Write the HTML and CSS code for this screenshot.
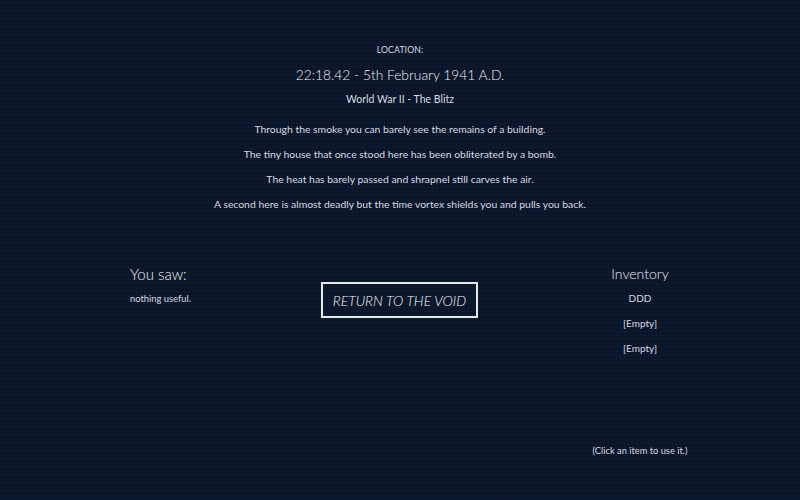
FILE: index.html
```html
<!DOCTYPE html>
<html>
<head>
<meta charset="utf-8">
<link rel="stylesheet" href="styles.css">
</head>
<body>
<div class="screen">
  <header class="scene">
    <div class="label">LOCATION:</div>
    <div class="date">22:18.42 - 5th February 1941 A.D.</div>
    <div class="era">World War II - The Blitz</div>
    <div class="story">
      <p>Through the smoke you can barely see the remains of a building.</p>
      <p>The tiny house that once stood here has been obliterated by a bomb.</p>
      <p>The heat has barely passed and shrapnel still carves the air.</p>
      <p>A second here is almost deadly but the time vortex shields you and pulls you back.</p>
    </div>
  </header>
  <section class="panel">
    <div class="saw">
      <div class="saw-title">You saw:</div>
      <div class="saw-text">nothing useful.</div>
    </div>
    <div class="action">
      <button class="void-btn">RETURN TO THE VOID</button>
    </div>
    <div class="inventory">
      <div class="inv-title">Inventory</div>
      <div class="inv-item">DDD</div>
      <div class="inv-item">[Empty]</div>
      <div class="inv-item">[Empty]</div>
      <div class="hint">(Click an item to use it.)</div>
    </div>
  </section>
</div>
</body>
</html>
```
FILE: styles.css
```css
html, body {
  margin: 0;
  padding: 0;
}
body {
  width: 800px;
  height: 500px;
  overflow: hidden;
  background-color: #0b1529;
  background-image:
    repeating-linear-gradient(0deg, rgba(40,70,120,0.08) 0 1px, transparent 1px 4px),
    repeating-linear-gradient(90deg, rgba(40,70,120,0.08) 0 1px, transparent 1px 4px);
  font-family: "Lato", "Liberation Sans", sans-serif;
  font-weight: 400;
  color: #d6dae1;
}
.screen {
  padding-top: 37px;
}
.scene {
  text-align: center;
}
.label {
  font-size: 8.7px;
  line-height: 25px;
  letter-spacing: 0.1px;
}
.date {
  font-size: 13.8px;
  font-weight: 300;
  line-height: 25px;
  color: #eceef2;
}
.era {
  font-size: 10.5px;
  line-height: 25px;
}
.story {
  margin-top: 5px;
}
.story p {
  margin: 0;
  font-size: 10.4px;
  line-height: 25px;
}
.panel {
  margin-top: 45px;
  padding-left: 130px;
  display: grid;
  grid-template-columns: 190px 160px 320px;
}
.saw-title {
  font-size: 15px;
  font-weight: 300;
  line-height: 24px;
  color: #eceef2;
}
.saw-text {
  font-size: 9.4px;
  line-height: 26px;
}
.action {
  padding-top: 20px;
  padding-left: 1px;
}
.void-btn {
  box-sizing: border-box;
  width: 157px;
  height: 36px;
  background: transparent;
  border: 2px solid #e8eaee;
  color: #f4f6f8;
  font-family: "Lato", "Liberation Sans", sans-serif;
  font-weight: 300;
  font-style: italic;
  font-size: 14px;
  padding: 0;
  cursor: pointer;
}
.inventory {
  text-align: center;
}
.inv-title {
  font-size: 14px;
  font-weight: 300;
  line-height: 24px;
  color: #eceef2;
}
.inv-item {
  font-size: 10px;
  line-height: 25px;
}
.hint {
  margin-top: 77px;
  font-size: 9.3px;
  line-height: 25px;
}
```
